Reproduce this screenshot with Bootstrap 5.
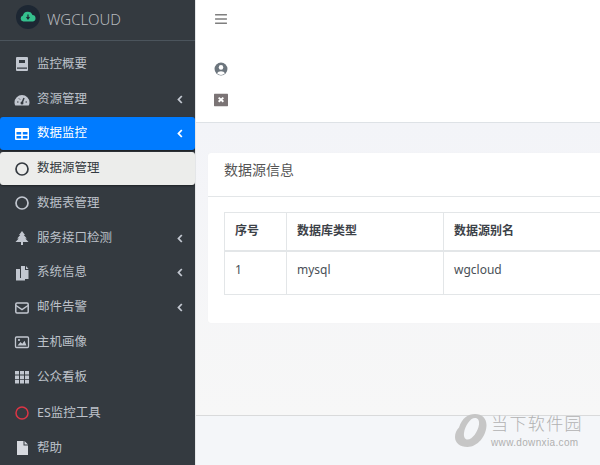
<!DOCTYPE html>
<html lang="zh">
<head>
<meta charset="utf-8">
<title>WGCLOUD</title>
<link rel="stylesheet" href="https://cdn.jsdelivr.net/npm/bootstrap@5.3.0/dist/css/bootstrap.min.css">
<style>
html,body{height:465px;overflow:hidden;margin:0}
body{font-family:"Noto Sans","Noto Sans CJK SC",sans-serif;background:#f4f6f9;color:#444}
.shell{width:600px;height:465px;overflow:hidden}
.side{width:196px;flex:0 0 196px;background:#343a40;border-right:1px solid #e4e6e8;height:465px;overflow:hidden}
.brand{height:41px;border-bottom:1px solid #4b545c;padding-left:16px;gap:7px;padding-bottom:6px}
.brand-name{font-size:15px;color:#b4b8bc;font-weight:300;margin-top:4px}
.menu{padding-top:5px}
.menu-item{height:35px;padding:0 12px 0 14px;color:#bcc1c9;font-size:12.5px;gap:7px;line-height:1;border-radius:3px;width:195px}
.menu-item.tall{height:36px}
.menu-item.tight{height:34px}
.menu-item.on{background:#007bff;color:#fff;height:33px;box-shadow:0 1px 2px rgba(0,0,0,.5)}
.menu-item.sub-on{background:#ecedeb;color:#343a40;height:33px;margin-top:2px;box-shadow:0 1px 2px rgba(0,0,0,.4)}
.ico{width:16px;height:16px;flex:0 0 16px}
.chev{width:6px;height:9px;margin-left:auto;margin-right:0}
.main{flex:1;min-width:0;position:relative;background:#f7f7f7}
.topbar{height:123px;background:#fff;border-bottom:1px solid #dee2e6;padding:12px 0 0 18px;gap:17px}
.top-ico{width:14px;height:14px;display:block}
.top-gap{margin-top:19px}
.content-zone{height:292px;padding:30px 0 0 12px;background:linear-gradient(#f3f4f8,#f7f7f7)}
.panel{background:#fff;height:170px;width:400px;border-radius:3px 0 0 3px;box-shadow:0 0 1px rgba(0,0,0,.05)}
.panel-head{height:44px;border-bottom:1px solid #e3e6e8;padding:6px 0 0 16px;font-size:14px;color:#555;line-height:22px}
.panel-body{padding:15px 0 0 16px}
.data{width:600px;border-collapse:collapse;font-size:12px;color:#495057;table-layout:fixed}
.data th,.data td{border:1px solid #e3e6e8;padding:0 10px;vertical-align:middle}
.data th{height:38px;font-weight:700;color:#3d4248;border-bottom-width:2px}
.data td{height:44px;padding-bottom:6px}
.foot{height:50px;background:#f4f6f9;border-top:1px solid #d9dadb}
.mark-wrap{position:absolute;left:258px;top:413px;gap:4px}
.mark-cn{font-size:17px;letter-spacing:1.4px;line-height:20px;color:#b2b2b2;font-weight:300}
.mark-url{font-size:10px;line-height:12px;font-family:"Liberation Sans",sans-serif;letter-spacing:.35px;color:#b0b0b0;margin-top:3px}
</style>
</head>
<body>
<div class="shell d-flex">
  <aside class="side">
    <div class="brand d-flex align-items-center">
      <svg width="24" height="24" viewBox="0 0 24 24"><circle cx="12" cy="12" r="12" fill="#1d2733"/><path d="M7.500 16.500a3 3 0 0 1-.6-5.900 5 5 0 0 1 9.600-.6 3.300 3.300 0 0 1 .5 6.500z" fill="#35c08e"/><path d="M12 9.500v4m-1.500-1.500 1.500 2 1.500-2" stroke="#1d2733" stroke-width="1.200" fill="none"/></svg>
      <span class="brand-name">WGCLOUD</span>
    </div>
    <nav class="menu d-flex flex-column">
      <div class="menu-item tall d-flex align-items-center"><svg class="ico" viewBox="0 0 16 16"><path d="M3 1h10a1 1 0 0 1 1 1v12a1 1 0 0 1-1 1H3a1 1 0 0 1-1-1V2a1 1 0 0 1 1-1z" fill="#c2c7d0"/><path d="M5 4h6v3H5zM3 11.500h10v1.200H3z" fill="#343a40"/></svg>监控概要</div>
      <div class="menu-item d-flex align-items-center"><svg class="ico" viewBox="0 0 16 16"><path d="M8 3a7.500 7.500 0 0 0-7.500 7.500c0 1.200.3 2.200.8 3h13.400c.5-.8.800-1.800.800-3A7.500 7.500 0 0 0 8 3z" fill="#c2c7d0"/><path d="M8 11l2-5" stroke="#343a40" stroke-width="1.500"/><circle cx="8" cy="11" r="1.500" fill="#343a40"/><path d="M3 10h1.500M11.500 10H13M5 6.500l1 1" stroke="#343a40"/></svg>资源管理<svg class="chev" viewBox="0 0 6 9"><path d="M4.800 1L1.500 4.500 4.800 8" fill="none" stroke="#c2c7d0" stroke-width="1.800"/></svg></div>
      <div class="menu-item on d-flex align-items-center"><svg class="ico" viewBox="0 0 16 16"><path fill-rule="evenodd" d="M2 2h12a1 1 0 0 1 1 1v10a1 1 0 0 1-1 1H2a1 1 0 0 1-1-1V3a1 1 0 0 1 1-1zM2.500 6v2.500h4.700V6zm6.300 0v2.500h4.700V6zM2.500 10v2.500h4.700V10zm6.300 0v2.500h4.700V10z" fill="#fff"/></svg>数据监控<svg class="chev" viewBox="0 0 6 9"><path d="M4.800 1L1.500 4.500 4.800 8" fill="none" stroke="#fff" stroke-width="1.800"/></svg></div>
      <div class="menu-item sub-on d-flex align-items-center"><svg class="ico" viewBox="0 0 16 16"><circle cx="8" cy="8" r="6" fill="none" stroke="#343a40" stroke-width="1.700"/></svg>数据源管理</div>
      <div class="menu-item tall d-flex align-items-center"><svg class="ico" viewBox="0 0 16 16"><circle cx="8" cy="8" r="6" fill="none" stroke="#c2c7d0" stroke-width="1.700"/></svg>数据表管理</div>
      <div class="menu-item tight d-flex align-items-center"><svg class="ico" viewBox="0 0 16 16"><path d="M8 1l3 4H9.800l3 3.500h-1.500L14.500 12H9v3H7v-3H1.500l3.200-3.500H3.200l3-3.500H5z" fill="#c2c7d0"/></svg>服务接口检测<svg class="chev" viewBox="0 0 6 9"><path d="M4.800 1L1.500 4.500 4.800 8" fill="none" stroke="#c2c7d0" stroke-width="1.800"/></svg></div>
      <div class="menu-item d-flex align-items-center"><svg class="ico" viewBox="0 0 16 16"><path d="M2 4h4v9h5v2.500H2z" fill="#c2c7d0"/><path d="M7 1h4v4h3.500v9H7z" fill="#c2c7d0"/><path d="M12 1l2.500 3H12z" fill="#c2c7d0"/></svg>系统信息<svg class="chev" viewBox="0 0 6 9"><path d="M4.800 1L1.500 4.500 4.800 8" fill="none" stroke="#c2c7d0" stroke-width="1.800"/></svg></div>
      <div class="menu-item d-flex align-items-center"><svg class="ico" viewBox="0 0 16 16"><rect x="1.800" y="3" width="12.400" height="10" rx="1.200" fill="none" stroke="#c2c7d0" stroke-width="1.500"/><path d="M2 5.500l6 4 6-4" fill="none" stroke="#c2c7d0" stroke-width="1.500"/></svg>邮件告警<svg class="chev" viewBox="0 0 6 9"><path d="M4.800 1L1.500 4.500 4.800 8" fill="none" stroke="#c2c7d0" stroke-width="1.800"/></svg></div>
      <div class="menu-item tight d-flex align-items-center"><svg class="ico" viewBox="0 0 16 16"><rect x="1.500" y="3" width="13" height="10.500" rx="1" fill="none" stroke="#c2c7d0" stroke-width="1.300"/><path d="M3.500 11.500l3-3.500 1.800 1.800 2.200-3 2 4.700z" fill="#c2c7d0"/><circle cx="5" cy="6" r="1.100" fill="#c2c7d0"/></svg>主机画像</div>
      <div class="menu-item tall d-flex align-items-center"><svg class="ico" viewBox="0 0 16 16"><path d="M1 2h4v3.600H1zM6 2h4v3.600H6zM11 2h4v3.600h-4zM1 6.400h4V10H1zM6 6.400h4V10H6zM11 6.400h4V10h-4zM1 10.800h4v3.600H1zM6 10.800h4v3.600H6zM11 10.800h4v3.600h-4z" fill="#c2c7d0"/></svg>公众看板</div>
      <div class="menu-item tall d-flex align-items-center"><svg class="ico" viewBox="0 0 16 16"><circle cx="8" cy="8" r="6" fill="none" stroke="#dc3545" stroke-width="1.500"/></svg>ES监控工具</div>
      <div class="menu-item tight d-flex align-items-center"><svg class="ico" viewBox="0 0 16 16"><path d="M3 1h6.500v4.500H14V15H3zM10.500 1L14 4.500h-3.500z" fill="#d6d9df"/></svg>帮助</div>
    </nav>
  </aside>
  <main class="main">
    <header class="topbar d-flex flex-column">
      <svg class="top-ico" viewBox="0 0 13 13"><path d="M1 2.500h11M1 6.500h11M1 10.500h11" stroke="#7f7f7f" stroke-width="1.500"/></svg>
      <svg class="top-ico top-gap" viewBox="0 0 13 13"><circle cx="6.500" cy="6.500" r="6" fill="#6c757d"/><circle cx="6.500" cy="5" r="2.100" fill="#fff"/><path d="M2.800 10.500a4 3 0 0 1 7.400 0 5 5 0 0 1-7.400 0z" fill="#fff"/></svg>
      <svg class="top-ico" viewBox="0 0 13 13"><rect width="13" height="11.500" y=".7" rx=".5" fill="#7b7475"/><path d="M4.300 4.300l4.400 3.900M8.700 4.300l-4.400 3.900" stroke="#fff" stroke-width="1.800"/></svg>
    </header>
    <div class="content-zone">
      <section class="panel">
        <div class="panel-head">数据源信息</div>
        <div class="panel-body">
          <table class="data">
            <colgroup><col style="width:62px"><col style="width:157px"><col style="width:381px"></colgroup>
            <thead><tr><th>序号</th><th>数据库类型</th><th>数据源别名</th></tr></thead>
            <tbody><tr><td>1</td><td>mysql</td><td>wgcloud</td></tr></tbody>
          </table>
        </div>
      </section>
    </div>
    <footer class="foot"></footer>
    <div class="mark-wrap d-flex align-items-center">
      <svg width="33" height="36" viewBox="0 0 33 36"><path fill-rule="evenodd" d="M21 1c7 0 11.500 4.500 11.500 11 0 11-9 22-19 22C6 34 1 30 1 24c0-4 1.500-7 4-9.500C8 5 14 1 21 1zM21 5c-5 0-10 8-11 15-.5 4 1 6.500 3.500 6.500 5 0 10.500-8 11.500-15 .5-4-1-6.500-4-6.500z" fill="#c6c6c6"/></svg>
      <div class="d-flex flex-column">
        <span class="mark-cn">当下软件园</span>
        <span class="mark-url">www.downxia.com</span>
      </div>
    </div>
  </main>
</div>
<script src="https://cdn.jsdelivr.net/npm/bootstrap@5.3.0/dist/js/bootstrap.bundle.min.js"></script>
</body>
</html>
